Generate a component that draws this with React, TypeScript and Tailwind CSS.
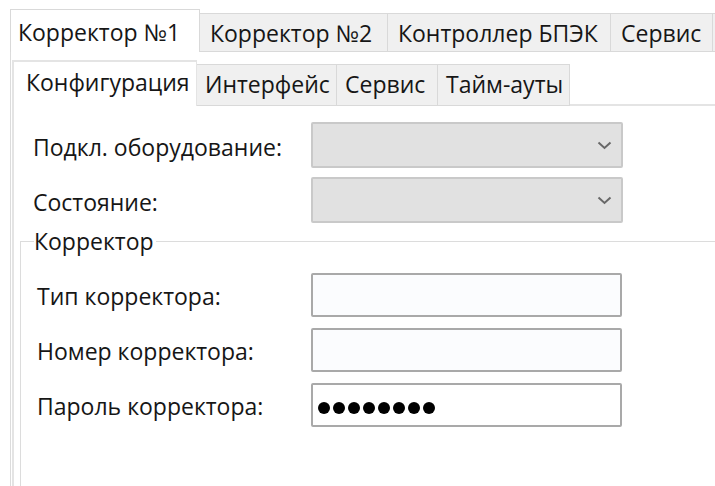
import React from 'react';

const outerTabs = [
  { label: 'Корректор №1', w: 190 },
  { label: 'Корректор №2', w: 188 },
  { label: 'Контроллер БПЭК', w: 223 },
  { label: 'Сервис', w: 102 },
  { label: '', w: 120 },
];

const innerTabs = [
  { label: 'Конфигурация', w: 185 },
  { label: 'Интерфейс', w: 140 },
  { label: 'Сервис', w: 101 },
  { label: 'Тайм-ауты', w: 132 },
];

const Chevron: React.FC = () => (
  <svg width="15" height="9" viewBox="0 0 15 9" className="text-[#686868]">
    <polyline points="1.5,1.5 7.5,7 13.5,1.5" fill="none" stroke="currentColor" strokeWidth="2" />
  </svg>
);

const ComboRow: React.FC<{ label: string }> = ({ label }) => (
  <div className="flex items-center">
    <div className="w-[278px] pt-[4px] text-[#161616]">{label}</div>
    <div className="w-[312px] h-[46px] bg-[#e1e1e1] border-2 border-[#c9c9c9] rounded-[2px] flex items-center justify-end pr-[9px]">
      <Chevron />
    </div>
  </div>
);

const InputRow: React.FC<{ label: string; dots?: number }> = ({ label, dots }) => (
  <div className="flex items-center">
    <div className="w-[274px] pt-[2px] text-[#161616]">{label}</div>
    <div
      className={`w-[311px] h-[44px] border-2 border-[#a9a9a9] rounded-[2px] flex items-center pl-[5px] pt-[6px] gap-[3px] ${
        dots ? 'bg-white' : 'bg-[#fbfcfe]'
      }`}
    >
      {Array.from({ length: dots ?? 0 }).map((_, i) => (
        <span key={i} className="w-[12px] h-[12px] rounded-full bg-black" />
      ))}
    </div>
  </div>
);

export default function App() {
  return (
    <div
      className="w-[715px] h-[486px] bg-white overflow-hidden text-[23px] leading-none"
      style={{ fontFamily: '"Open Sans", "Noto Sans", sans-serif' }}
    >
      {/* top-level tab strip */}
      <div className="flex items-end pl-[10px] pt-[9px] whitespace-nowrap">
        {outerTabs.map((t, i) =>
          i === 0 ? (
            <div
              key={i}
              style={{ width: t.w }}
              className="h-[43px] shrink-0 bg-white border border-b-0 border-[#d9d9d9] flex items-center pl-[7px] pt-[2px] text-[#161616]"
            >
              {t.label}
            </div>
          ) : (
            <div
              key={i}
              style={{ width: t.w }}
              className="h-[39px] shrink-0 bg-[#f0f0f0] border border-l-0 border-[#d9d9d9] flex items-center pl-[10px] pt-[2px] text-[#161616]"
            >
              {t.label}
            </div>
          )
        )}
      </div>

      {/* page of the first tab */}
      <div className="ml-[10px] h-full border-l border-[#dcdcdc] pl-[1px] pt-[8px]">
        <div className="flex items-end whitespace-nowrap">
          {innerTabs.map((t, i) =>
            i === 0 ? (
              <div
                key={t.label}
                style={{ width: t.w }}
                className="h-[46px] shrink-0 bg-white border-l-2 border-t-2 border-r border-[#e4e4e4] flex items-center pl-[12px] pb-[3px] text-[#161616]"
              >
                {t.label}
              </div>
            ) : (
              <div
                key={t.label}
                style={{ width: t.w }}
                className="h-[42px] shrink-0 bg-[#f0f0f0] border border-l-0 border-[#d9d9d9] flex items-center pl-[8px] pb-[1px] text-[#161616]"
              >
                {t.label}
              </div>
            )
          )}
          <div className="flex-1 border-b-2 border-[#e4e4e4]" />
        </div>

        <div className="h-full border-l-2 border-[#e4e4e4]">
          <div className="pl-[19px] pt-[16px] flex flex-col gap-[9px]">
            <ComboRow label="Подкл. оборудование:" />
            <ComboRow label="Состояние:" />
          </div>

          {/* group box */}
          <div className="ml-[6px] mt-[18px] h-full border-l border-t border-[#dcdcdc] relative">
            <span className="absolute left-[13px] -top-[12px] bg-white pr-[2px] text-[#161616]">Корректор</span>
            <div className="pl-[16px] pt-[31px] flex flex-col gap-[11px]">
              <InputRow label="Тип корректора:" />
              <InputRow label="Номер корректора:" />
              <InputRow label="Пароль корректора:" dots={8} />
            </div>
          </div>
        </div>
      </div>
    </div>
  );
}
